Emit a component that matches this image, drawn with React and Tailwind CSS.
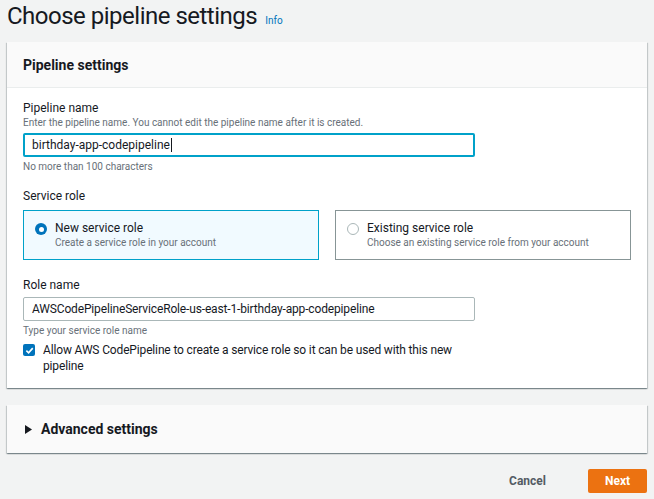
import { useState } from "react";

const Radio = ({ checked }) => (
  <span
    className={
      checked
        ? "mt-[2px] flex h-[12px] w-[12px] shrink-0 items-center justify-center rounded-full bg-[#0073bb]"
        : "mt-[2px] h-[12px] w-[12px] shrink-0 rounded-full border border-[#aab7b8] bg-white"
    }
  >
    {checked && <span className="h-[5px] w-[5px] rounded-full bg-white" />}
  </span>
);

const RoleTile = ({ checked, title, desc, onClick }) => (
  <div
    onClick={onClick}
    className={
      checked
        ? "flex h-[50px] cursor-pointer gap-[8px] border border-[#00a1c9] bg-[#f1faff] px-[11px] pt-[10px]"
        : "flex h-[50px] cursor-pointer gap-[8px] border border-[#879596] bg-white px-[11px] pt-[10px]"
    }
  >
    <Radio checked={checked} />
    <div>
      <div className="text-[12px] leading-[15px] text-[#16191f]">{title}</div>
      <div className="text-[10px] leading-[13px] text-[#687078]">{desc}</div>
    </div>
  </div>
);

export default function App() {
  const [role, setRole] = useState("new");
  const [allow, setAllow] = useState(true);

  return (
    <div
      className="h-[499px] w-[654px] overflow-hidden bg-[#f2f3f3] text-[#16191f]"
      style={{ fontFamily: "Roboto, 'Noto Sans', sans-serif" }}
    >
      {/* Page title */}
      <div className="flex items-baseline gap-[8px] px-[7px] pt-[1px]">
        <h1 className="text-[24px] leading-[30px] tracking-[-0.5px] text-[#16191f]">
          Choose pipeline settings
        </h1>
        <a className="text-[10px] text-[#0073bb]">Info</a>
      </div>

      {/* Pipeline settings card */}
      <div className="mx-[7px] mt-[11px] w-[640px] bg-white shadow-[0_1px_1px_0_rgba(0,28,36,0.3),1px_1px_1px_0_rgba(0,28,36,0.15),-1px_1px_1px_0_rgba(0,28,36,0.15)]">
        <div className="flex h-[46px] items-center border-b border-[#eaeded] bg-[#fafafa] px-[16px] pt-[2px]">
          <h2 className="text-[14px] font-bold text-[#16191f]">Pipeline settings</h2>
        </div>

        <div className="px-[16px] pb-[14px] pt-[13px]">
          {/* Pipeline name */}
          <div className="text-[12px] leading-[15px]">Pipeline name</div>
          <div className="text-[10px] leading-[13px] text-[#687078]">
            Enter the pipeline name. You cannot edit the pipeline name after it is created.
          </div>
          <div className="mt-[4px] flex h-[24px] w-[452px] items-center rounded-[2px] border-2 border-[#00a1c9] px-[7px] text-[12px]">
            birthday-app-codepipeline
            <span className="ml-[1px] h-[14px] w-[1px] bg-[#16191f]" />
          </div>
          <div className="mt-[3px] text-[10px] leading-[13px] text-[#687078]">
            No more than 100 characters
          </div>

          {/* Service role */}
          <div className="mt-[16px] text-[12px] leading-[15px]">Service role</div>
          <div className="mt-[6px] grid grid-cols-2 gap-[16px]">
            <RoleTile
              checked={role === "new"}
              title="New service role"
              desc="Create a service role in your account"
              onClick={() => setRole("new")}
            />
            <RoleTile
              checked={role === "existing"}
              title="Existing service role"
              desc="Choose an existing service role from your account"
              onClick={() => setRole("existing")}
            />
          </div>

          {/* Role name */}
          <div className="mt-[18px] text-[12px] leading-[15px]">Role name</div>
          <div className="mt-[4px] flex h-[24px] w-[452px] items-center rounded-[2px] border border-[#aab7b8] px-[8px] text-[12px] tracking-[-0.15px]">
            AWSCodePipelineServiceRole-us-east-1-birthday-app-codepipeline
          </div>
          <div className="mt-[3px] text-[10px] leading-[13px] text-[#687078]">
            Type your service role name
          </div>

          <label className="mt-[5px] flex cursor-pointer gap-[8px]">
            <span
              onClick={() => setAllow(!allow)}
              className={
                allow
                  ? "mt-[2px] flex h-[12px] w-[12px] shrink-0 items-center justify-center rounded-[2px] bg-[#0073bb]"
                  : "mt-[2px] h-[12px] w-[12px] shrink-0 rounded-[2px] border border-[#aab7b8] bg-white"
              }
            >
              {allow && (
                <svg width="9" height="9" viewBox="0 0 10 10" fill="none">
                  <path d="M1.5 5.2 4 7.6 8.6 2.4" stroke="white" strokeWidth="1.8" />
                </svg>
              )}
            </span>
            <span className="w-[420px] text-[12px] leading-[16px] tracking-[-0.15px]">
              Allow AWS CodePipeline to create a service role so it can be used with this new pipeline
            </span>
          </label>
        </div>
      </div>

      {/* Advanced settings */}
      <div className="mx-[7px] mt-[17px] flex h-[48px] w-[640px] items-center gap-[9px] bg-[#fafafa] px-[18px] shadow-[0_1px_1px_0_rgba(0,28,36,0.3),1px_1px_1px_0_rgba(0,28,36,0.15),-1px_1px_1px_0_rgba(0,28,36,0.15)]">
        <svg width="7" height="9" viewBox="0 0 7 9">
          <path d="M0 0 7 4.5 0 9Z" fill="#16191f" />
        </svg>
        <span className="text-[14px] font-bold">Advanced settings</span>
      </div>

      {/* Footer actions */}
      <div className="mt-[16px] flex items-center justify-end gap-[32px] pr-[7px]">
        <button className="px-[10px] text-[12px] font-bold text-[#545b64]">Cancel</button>
        <button className="h-[24px] w-[59px] rounded-[2px] bg-[#ec7211] text-[12px] font-bold text-white">
          Next
        </button>
      </div>
    </div>
  );
}
